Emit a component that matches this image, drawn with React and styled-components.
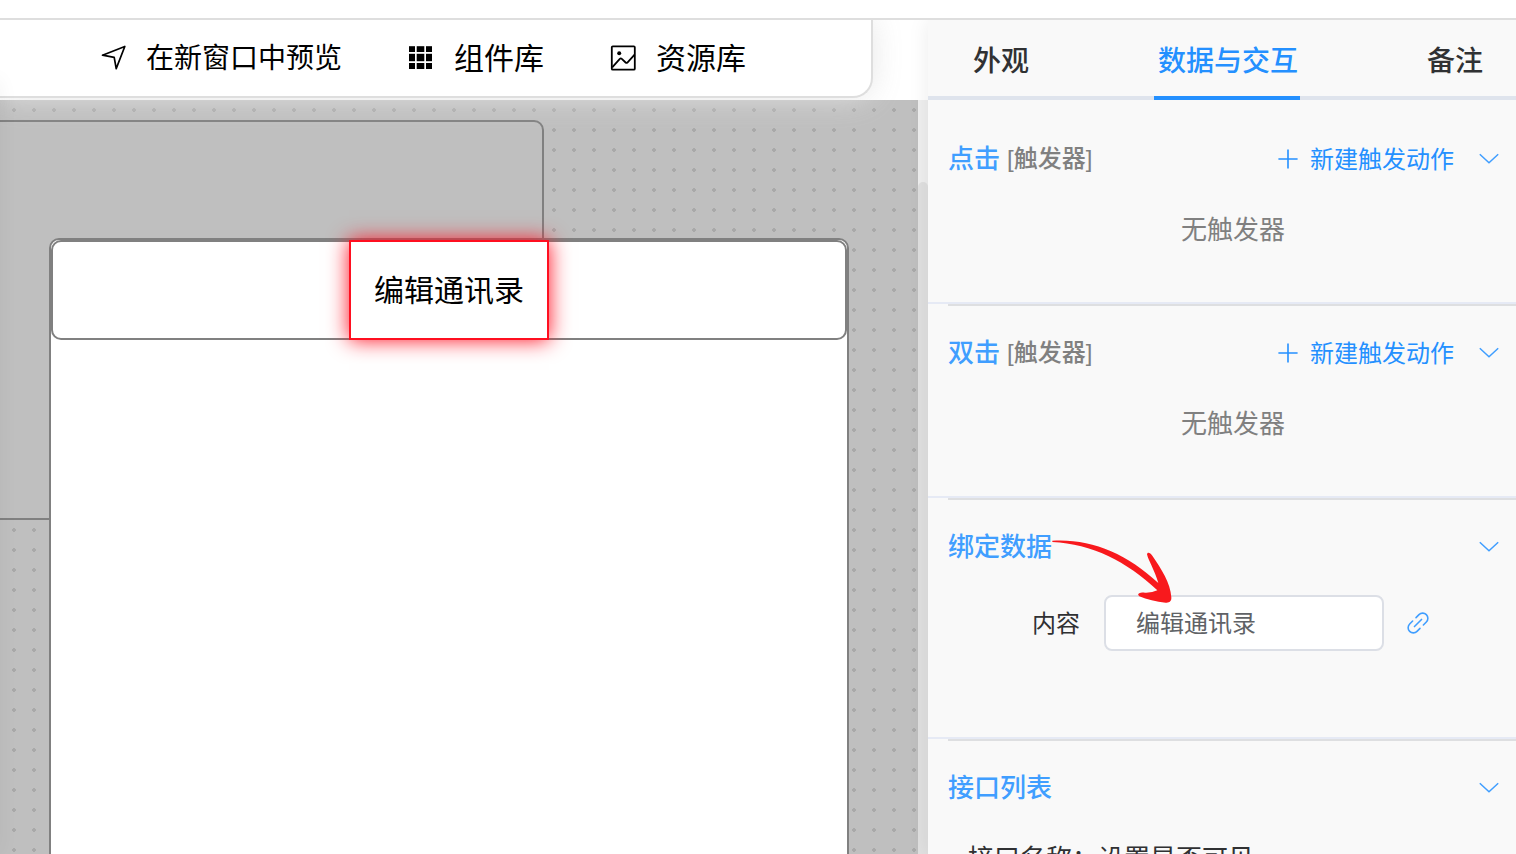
import React, { useState } from "react";
import styled, { createGlobalStyle, css } from "styled-components";

const GlobalStyle = createGlobalStyle`
  * { box-sizing: border-box; }
  body {
    margin: 0;
    overflow: hidden;
    background: #fff;
    font-family: "Noto Sans CJK SC", "Noto Sans", sans-serif;
  }
  button, input {
    font-family: inherit;
    margin: 0;
  }
  button {
    padding: 0;
    border: 0;
    background: none;
    cursor: pointer;
  }
`;

const Page = styled.div`
  display: flex;
  flex-direction: column;
  height: 100vh;
`;

const TopStrip = styled.header`
  flex: 0 0 20px;
  border-bottom: 2px solid #dedede;
`;

const Body = styled.div`
  display: flex;
  flex: 1;
  min-height: 0;
`;

const Workspace = styled.main`
  position: relative;
  display: flex;
  flex-direction: column;
  flex: 1;
  min-width: 0;
  &::before {
    content: "";
    position: absolute;
    z-index: 2;
    left: -20px;
    top: 60px;
    bottom: 0;
    width: 20px;
    box-shadow: 0 0 20px rgba(0, 0, 0, 0.05);
    pointer-events: none;
  }
`;

const ToolbarArea = styled.div`
  position: relative;
  z-index: 1;
  flex: 0 0 80px;
  padding: 0 55px 2px 0;
  clip-path: inset(0 0 -40px 0);
`;

const Toolbar = styled.nav`
  display: flex;
  align-items: center;
  gap: 66px;
  height: 78px;
  padding-left: 100px;
  background: #fff;
  border: solid #dedede;
  border-width: 0 2px 2px 0;
  border-bottom-right-radius: 20px;
  box-shadow: 0 0 30px rgba(228, 228, 228, 0.9);
`;

const ToolButton = styled.button`
  display: flex;
  align-items: center;
  gap: 20px;
  color: #000;
  font-size: ${(p) => (p.$compact ? "28px" : "30px")};
  line-height: 40px;
  white-space: nowrap;
`;

const ToolLabel = styled.span`
  padding-bottom: 4px;
`;

const Icon = styled.svg`
  display: block;
  flex: none;
  fill: none;
  stroke: currentColor;
  overflow: visible;
`;

const CanvasRow = styled.div`
  display: flex;
  flex: 1;
  min-height: 0;
`;

const Canvas = styled.div`
  position: relative;
  flex: 1;
  overflow: hidden;
  background: #bfbfbf radial-gradient(circle, #a9a9a9 1px, #a9a9a9 2px, transparent 2px) 4px 0 / 20px 20px;
`;

const ScrollTrack = styled.div`
  flex: 0 0 10px;
  padding-top: 82px;
  background: #efefef;
`;

const ScrollThumb = styled.div`
  height: 100%;
  border-radius: 5px 5px 0 0;
  background: #e0e0e0;
`;

const Frame = styled.section`
  position: absolute;
  border: 2px solid #808080;
  border-radius: 10px;
`;

const BackFrame = styled(Frame)`
  left: -256px;
  top: 20px;
  width: 800px;
  height: 400px;
  background: #bfbfbf;
`;

const FrontFrame = styled(Frame)`
  left: 49px;
  top: 138px;
  width: 800px;
  height: 1200px;
  background: #fff;
`;

const FrameHeader = styled.div`
  display: flex;
  justify-content: center;
  height: 100px;
  margin: 0;
  box-shadow: inset 0 0 0 2px #808080;
  border-radius: 10px;
`;

const SelectedText = styled.div`
  display: flex;
  align-items: center;
  justify-content: center;
  width: 200px;
  padding-bottom: 4px;
  border: 2px solid #ff0f20;
  background: #fff;
  color: #000;
  font-size: 30px;
  box-shadow: 0 0 20px #ff0f20;
`;

const Panel = styled.aside`
  position: relative;
  z-index: 3;
  flex: 0 0 588px;
  overflow: hidden;
  background: #f9f9f9;
`;

const PanelShade = styled.div`
  position: relative;
  z-index: 2;
  display: flex;
  box-shadow: 0 0 20px rgba(0, 0, 0, 0.08);
  clip-path: inset(0 0 0 -40px);
`;

const Tabs = styled.div`
  display: flex;
  justify-content: space-between;
  height: 80px;
  padding: 0 31px 0 41px;
  box-shadow: inset 0 -4px #dfe4ed;
`;

const Tab = styled.button`
  padding: 0 2px 0 4px;
  border-bottom: 4px solid transparent;
  color: #303133;
  font-size: 28px;
  font-weight: 500;
  line-height: 76px;
  ${(p) =>
    p.$active &&
    css`
      color: #2490ff;
      border-bottom-color: #2490ff;
    `}
`;

const TabLabel = styled.span`
  display: block;
  height: 76px;
  line-height: 78px;
`;

const Sections = styled.div`
  padding-top: 10px;
`;

const Section = styled.section`
  height: ${(p) => (p.$tall ? "241px" : "194px")};
  border-bottom: 2px solid #e6eaf5;
  &::before {
    content: "";
    display: block;
    height: 2px;
    margin-left: 20px;
    background: ${(p) => (p.$first ? "transparent" : "#dedfe1")};
  }
`;

const SectionHead = styled.div`
  display: flex;
  align-items: center;
  height: 40px;
  margin-top: 26px;
  padding: 0 16px 0 20px;
`;

const SectionTitle = styled.h2`
  margin: 0;
  padding-bottom: 2px;
  color: #409eff;
  font-size: 26px;
  font-weight: 500;
  line-height: 40px;
`;

const TitleNote = styled.span`
  margin-left: 7px;
  padding-top: 2px;
  color: #808080;
  font-family: "Liberation Sans", "Noto Sans CJK SC", sans-serif;
  font-size: 24px;
  font-weight: 500;
  line-height: 40px;
`;

const NoteText = styled.span`
  font-family: "Noto Sans CJK SC", sans-serif;
  line-height: 1;
`;

const AddButton = styled.button`
  display: flex;
  align-items: center;
  gap: 12px;
  margin-left: auto;
  color: #2490ff;
  font-size: 24px;
  line-height: 40px;
`;

const FoldButton = styled.button`
  margin-left: ${(p) => (p.$alone ? "auto" : "24px")};
  padding-top: 2px;
  color: #409eff;
`;

const EmptyNote = styled.p`
  margin: 30px 0 0;
  padding-left: 22px;
  color: #808080;
  font-size: 26px;
  line-height: 40px;
  text-align: center;
`;

const FormRow = styled.div`
  position: relative;
  display: flex;
  align-items: center;
  gap: 24px;
  margin-top: 29px;
  padding-left: 104px;
`;

const FieldLabel = styled.label`
  padding-bottom: 4px;
  color: #303133;
  font-size: 24px;
`;

const TextField = styled.input`
  width: 280px;
  height: 56px;
  padding: 0 30px 4px;
  border: 2px solid #dcdfe6;
  border-radius: 8px;
  background: #fff;
  color: #606266;
  font-size: 24px;
  outline: none;
`;

const LinkButton = styled.button`
  color: #409eff;
`;

const PointerArrow = styled.svg`
  position: absolute;
  left: 92px;
  top: -75px;
  width: 300px;
  height: 150px;
  pointer-events: none;
`;

const InterfaceName = styled.p`
  margin: 30px 0 0;
  padding-left: 40px;
  color: #303133;
  font-size: 26px;
  line-height: 40px;
`;

const SendIcon = () => (
  <Icon width="26" height="26" viewBox="0 0 26 26" strokeWidth="1.7" strokeLinejoin="round">
    <path d="M2.5 10.2 24.8 1.5 16.2 23.6 14.2 12.4Z" />
  </Icon>
);

const GridIcon = () => (
  <Icon width="26" height="26" viewBox="0 0 26 26">
    {[[1.2, 5.8], [8.8, 7.4], [18, 6]].map(([y, h]) =>
      [[1, 6], [8.7, 7.6], [18, 6]].map(([x, w]) => (
        <rect key={`${x}-${y}`} x={x} y={y} width={w} height={h} fill="currentColor" stroke="none" />
      ))
    )}
  </Icon>
);

const PictureIcon = () => (
  <Icon width="26" height="26" viewBox="0 0 26 26" strokeWidth="1.8">
    <rect x="1.8" y="1.3" width="23" height="23.4" rx="1" />
    <circle cx="9.2" cy="8.2" r="2" fill="currentColor" stroke="none" />
    <path d="m2.2 22.4 7.6-8.6q1-.9 2 0l3.8 3.7q.9.8 1.8 0L24.6 9.6" />
  </Icon>
);

const PlusIcon = () => (
  <Icon width="20" height="20" viewBox="0 -1 20 20" strokeWidth="1.6">
    <path d="M0.4 10H19.6M10 0.4V19.6" />
  </Icon>
);

const ChevronIcon = () => (
  <Icon width="22" height="22" viewBox="0 0 22 22" strokeWidth="1.5">
    <path d="m1.8 6.2 9.2 8.6 9.2-8.6" />
  </Icon>
);

const LinkIcon = () => (
  <Icon width="20" height="20" viewBox="-10 -10 20 20" strokeWidth="1.6" strokeLinecap="round">
    <g transform="rotate(-45)">
      <path d="M-2.4-5.2H-6.6a5.2 5.2 0 0 0 0 10.4H-2.4M2.4-5.2H6.6a5.2 5.2 0 0 1 0 10.4H2.4M-5 0H5" />
    </g>
  </Icon>
);

const TABS = ["外观", "数据与交互", "备注"];

function TriggerSection({ title, first }) {
  return (
    <Section $first={first}>
      <SectionHead>
        <SectionTitle>{title}</SectionTitle>
        <TitleNote>
          [<NoteText>触发器</NoteText>]
        </TitleNote>
        <AddButton type="button">
          <PlusIcon />
          新建触发动作
        </AddButton>
        <FoldButton type="button" aria-label={`折叠${title}`}>
          <ChevronIcon />
        </FoldButton>
      </SectionHead>
      <EmptyNote>无触发器</EmptyNote>
    </Section>
  );
}

export default function App() {
  const [active, setActive] = useState(TABS[1]);
  const [content, setContent] = useState("编辑通讯录");

  return (
    <Page>
      <GlobalStyle />
      <TopStrip />
      <Body>
        <Workspace>
          <ToolbarArea>
            <Toolbar>
              <ToolButton type="button" $compact>
                <SendIcon />
                <ToolLabel>在新窗口中预览</ToolLabel>
              </ToolButton>
              <ToolButton type="button">
                <GridIcon />
                <ToolLabel>组件库</ToolLabel>
              </ToolButton>
              <ToolButton type="button">
                <PictureIcon />
                <ToolLabel>资源库</ToolLabel>
              </ToolButton>
            </Toolbar>
          </ToolbarArea>
          <CanvasRow>
            <Canvas>
              <BackFrame />
              <FrontFrame>
                <FrameHeader>
                  <SelectedText>{content}</SelectedText>
                </FrameHeader>
              </FrontFrame>
            </Canvas>
            <ScrollTrack>
              <ScrollThumb />
            </ScrollTrack>
          </CanvasRow>
        </Workspace>
        <PanelShade>
          <Panel>
            <Tabs role="tablist">
              {TABS.map((name) => (
                <Tab
                  key={name}
                  type="button"
                  role="tab"
                  aria-selected={name === active}
                  $active={name === active}
                  onClick={() => setActive(name)}
                >
                  <TabLabel>{name}</TabLabel>
                </Tab>
              ))}
            </Tabs>
            <Sections>
              <TriggerSection title="点击" first />
              <TriggerSection title="双击" />
              <Section $tall>
                <SectionHead>
                  <SectionTitle>绑定数据</SectionTitle>
                  <FoldButton type="button" aria-label="折叠绑定数据" $alone>
                    <ChevronIcon />
                  </FoldButton>
                </SectionHead>
                <FormRow>
                  <FieldLabel htmlFor="content">内容</FieldLabel>
                  <TextField id="content" value={content} onChange={(e) => setContent(e.target.value)} />
                  <LinkButton type="button" aria-label="绑定">
                    <LinkIcon />
                  </LinkButton>
                  <PointerArrow viewBox="0 0 900 450" aria-hidden="true">
                    <path
                      fill="#f8191d"
                      d="M97 62C210 55 318 98 415 189C404 151 384 119 381 103C382 94 391 98 397 107C424 147 451 188 454 232C455 244 448 249 437 248C409 245 380 239 358 229C348 221 362 217 374 218Q396 219 412 211C320 124 216 72 97 66Z"
                    />
                  </PointerArrow>
                </FormRow>
              </Section>
              <Section $tall>
                <SectionHead>
                  <SectionTitle>接口列表</SectionTitle>
                  <FoldButton type="button" aria-label="折叠接口列表" $alone>
                    <ChevronIcon />
                  </FoldButton>
                </SectionHead>
                <InterfaceName>接口名称：设置是否可见</InterfaceName>
              </Section>
            </Sections>
          </Panel>
        </PanelShade>
      </Body>
    </Page>
  );
}
